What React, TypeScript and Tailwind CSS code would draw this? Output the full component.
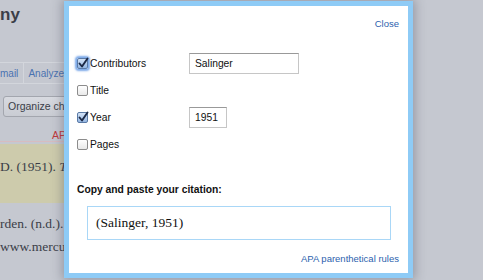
import React from "react";

function Box({ checked, focus }: { checked?: boolean; focus?: boolean }) {
  if (!checked) {
    return (
      <span className="inline-block w-[11px] h-[11px] rounded-[2px] border border-[#8c8c8c] bg-gradient-to-b from-white to-[#e9e9e9] shrink-0" />
    );
  }
  return (
    <span
      className={
        "relative inline-block w-[11px] h-[11px] rounded-[2px] border border-[#5a7aa6] bg-gradient-to-b from-[#d4e3f6] to-[#94b6e2] shrink-0 " +
        (focus ? "shadow-[0_0_2px_2px_rgba(80,140,225,0.75)]" : "")
      }
    >
      <svg className="absolute left-[0px] top-[-2px]" width="11" height="12" viewBox="0 0 11 12">
        <path d="M1.5 6.5 L4 9.5 L9.5 1.5" fill="none" stroke="#1c2946" strokeWidth="1.9" strokeLinecap="round" strokeLinejoin="round" />
      </svg>
    </span>
  );
}

function Row({
  label,
  checked,
  focus,
  value,
  inputW,
}: {
  label: string;
  checked?: boolean;
  focus?: boolean;
  value?: string;
  inputW?: string;
}) {
  return (
    <div className="h-[27px] flex items-center">
      <div className="w-[112px] flex items-center">
        <Box checked={checked} focus={focus} />
        <span className="ml-[2px] text-[10.3px] leading-[13px] text-[#111]">{label}</span>
      </div>
      {value !== undefined && (
        <div
          className={
            inputW +
            " h-[21px] flex items-center pl-[5px] border border-[#c6c6c6] border-t-[#999] text-[10.3px] text-[#111] bg-white"
          }
        >
          {value}
        </div>
      )}
    </div>
  );
}

export default function App() {
  return (
    <div
      className="relative w-[483px] h-[280px] overflow-hidden bg-[#c5c8d0]"
      style={{ fontFamily: '"Liberation Sans", Arial, sans-serif' }}
    >
      {/* background page */}
      <div className="w-[64px] overflow-hidden flex flex-col text-[#3b3e48]">
        <div className="pt-[6px] h-[62px] text-[17px] leading-[17px] font-bold">ny</div>
        <div className="h-[22px] flex items-center border-y border-[#d3d6dc] text-[10px] whitespace-nowrap">
          <span className="text-[#4a72b0]">mail</span>
          <span className="mx-[5px] w-px h-full bg-[#d3d6dc]" />
          <span className="text-[#4a72b0]">Analyze</span>
        </div>
        <div className="h-[12px]" />
        <div className="ml-[3px] w-[70px] h-[21px] flex items-center pl-[4px] rounded-l-[3px] border border-[#a3a6ae] bg-gradient-to-b from-[#d8dae0] to-[#c9ccd3] text-[10.5px] whitespace-nowrap">
          Organize chec
        </div>
        <div className="h-[14px] mt-[11px] pl-[52px] text-[10.5px] leading-[14px] text-[#c0393b] border-b border-[#d7bcc0] whitespace-nowrap">
          AP
        </div>
        <div
          className="mt-[2px] h-[59px] bg-[#cdcbac] pt-[15px] text-[13.5px] leading-[16px] whitespace-nowrap"
          style={{ fontFamily: '"Liberation Serif", "Times New Roman", serif' }}
        >
          D. (1951). <i>T</i>
        </div>
        <div
          className="flex flex-col text-[13.5px] whitespace-nowrap"
          style={{ fontFamily: '"Liberation Serif", "Times New Roman", serif' }}
        >
          <div className="mt-[13px] leading-[16px]">rden. (n.d.).</div>
          <div className="mt-[7px] leading-[16px]">www.mercury</div>
        </div>
      </div>

      {/* dialog */}
      <div className="absolute left-[64px] top-[1px] w-[349px] h-[277px] border-[5px] border-[#8ecbf6] bg-white shadow-[0_0_10px_2px_rgba(60,64,80,0.35)]">
        <div className="flex flex-col h-full">
          <div className="pt-[12px] pr-[9px] text-right text-[9.5px] leading-[12px] text-[#2d5fae]">Close</div>
          <div className="mt-[20px] pl-[8px] flex flex-col">
            <Row label="Contributors" checked focus value="Salinger" inputW="w-[110px]" />
            <Row label="Title" />
            <Row label="Year" checked value="1951" inputW="w-[38px]" />
            <Row label="Pages" />
          </div>
          <div className="mt-[25px] pl-[8px] text-[10.3px] leading-[13px] font-bold text-[#111]">
            Copy and paste your citation:
          </div>
          <div
            className="mt-[10px] ml-[18px] w-[304px] h-[34px] flex items-center pl-[8px] border border-[#a9d7f7] text-[13.5px] text-[#111]"
            style={{ fontFamily: '"Liberation Serif", "Times New Roman", serif' }}
          >
            (Salinger, 1951)
          </div>
          <div className="mt-[13px] pr-[9px] text-right text-[9.5px] leading-[12px] text-[#2d5fae]">
            APA parenthetical rules
          </div>
        </div>
      </div>
    </div>
  );
}
